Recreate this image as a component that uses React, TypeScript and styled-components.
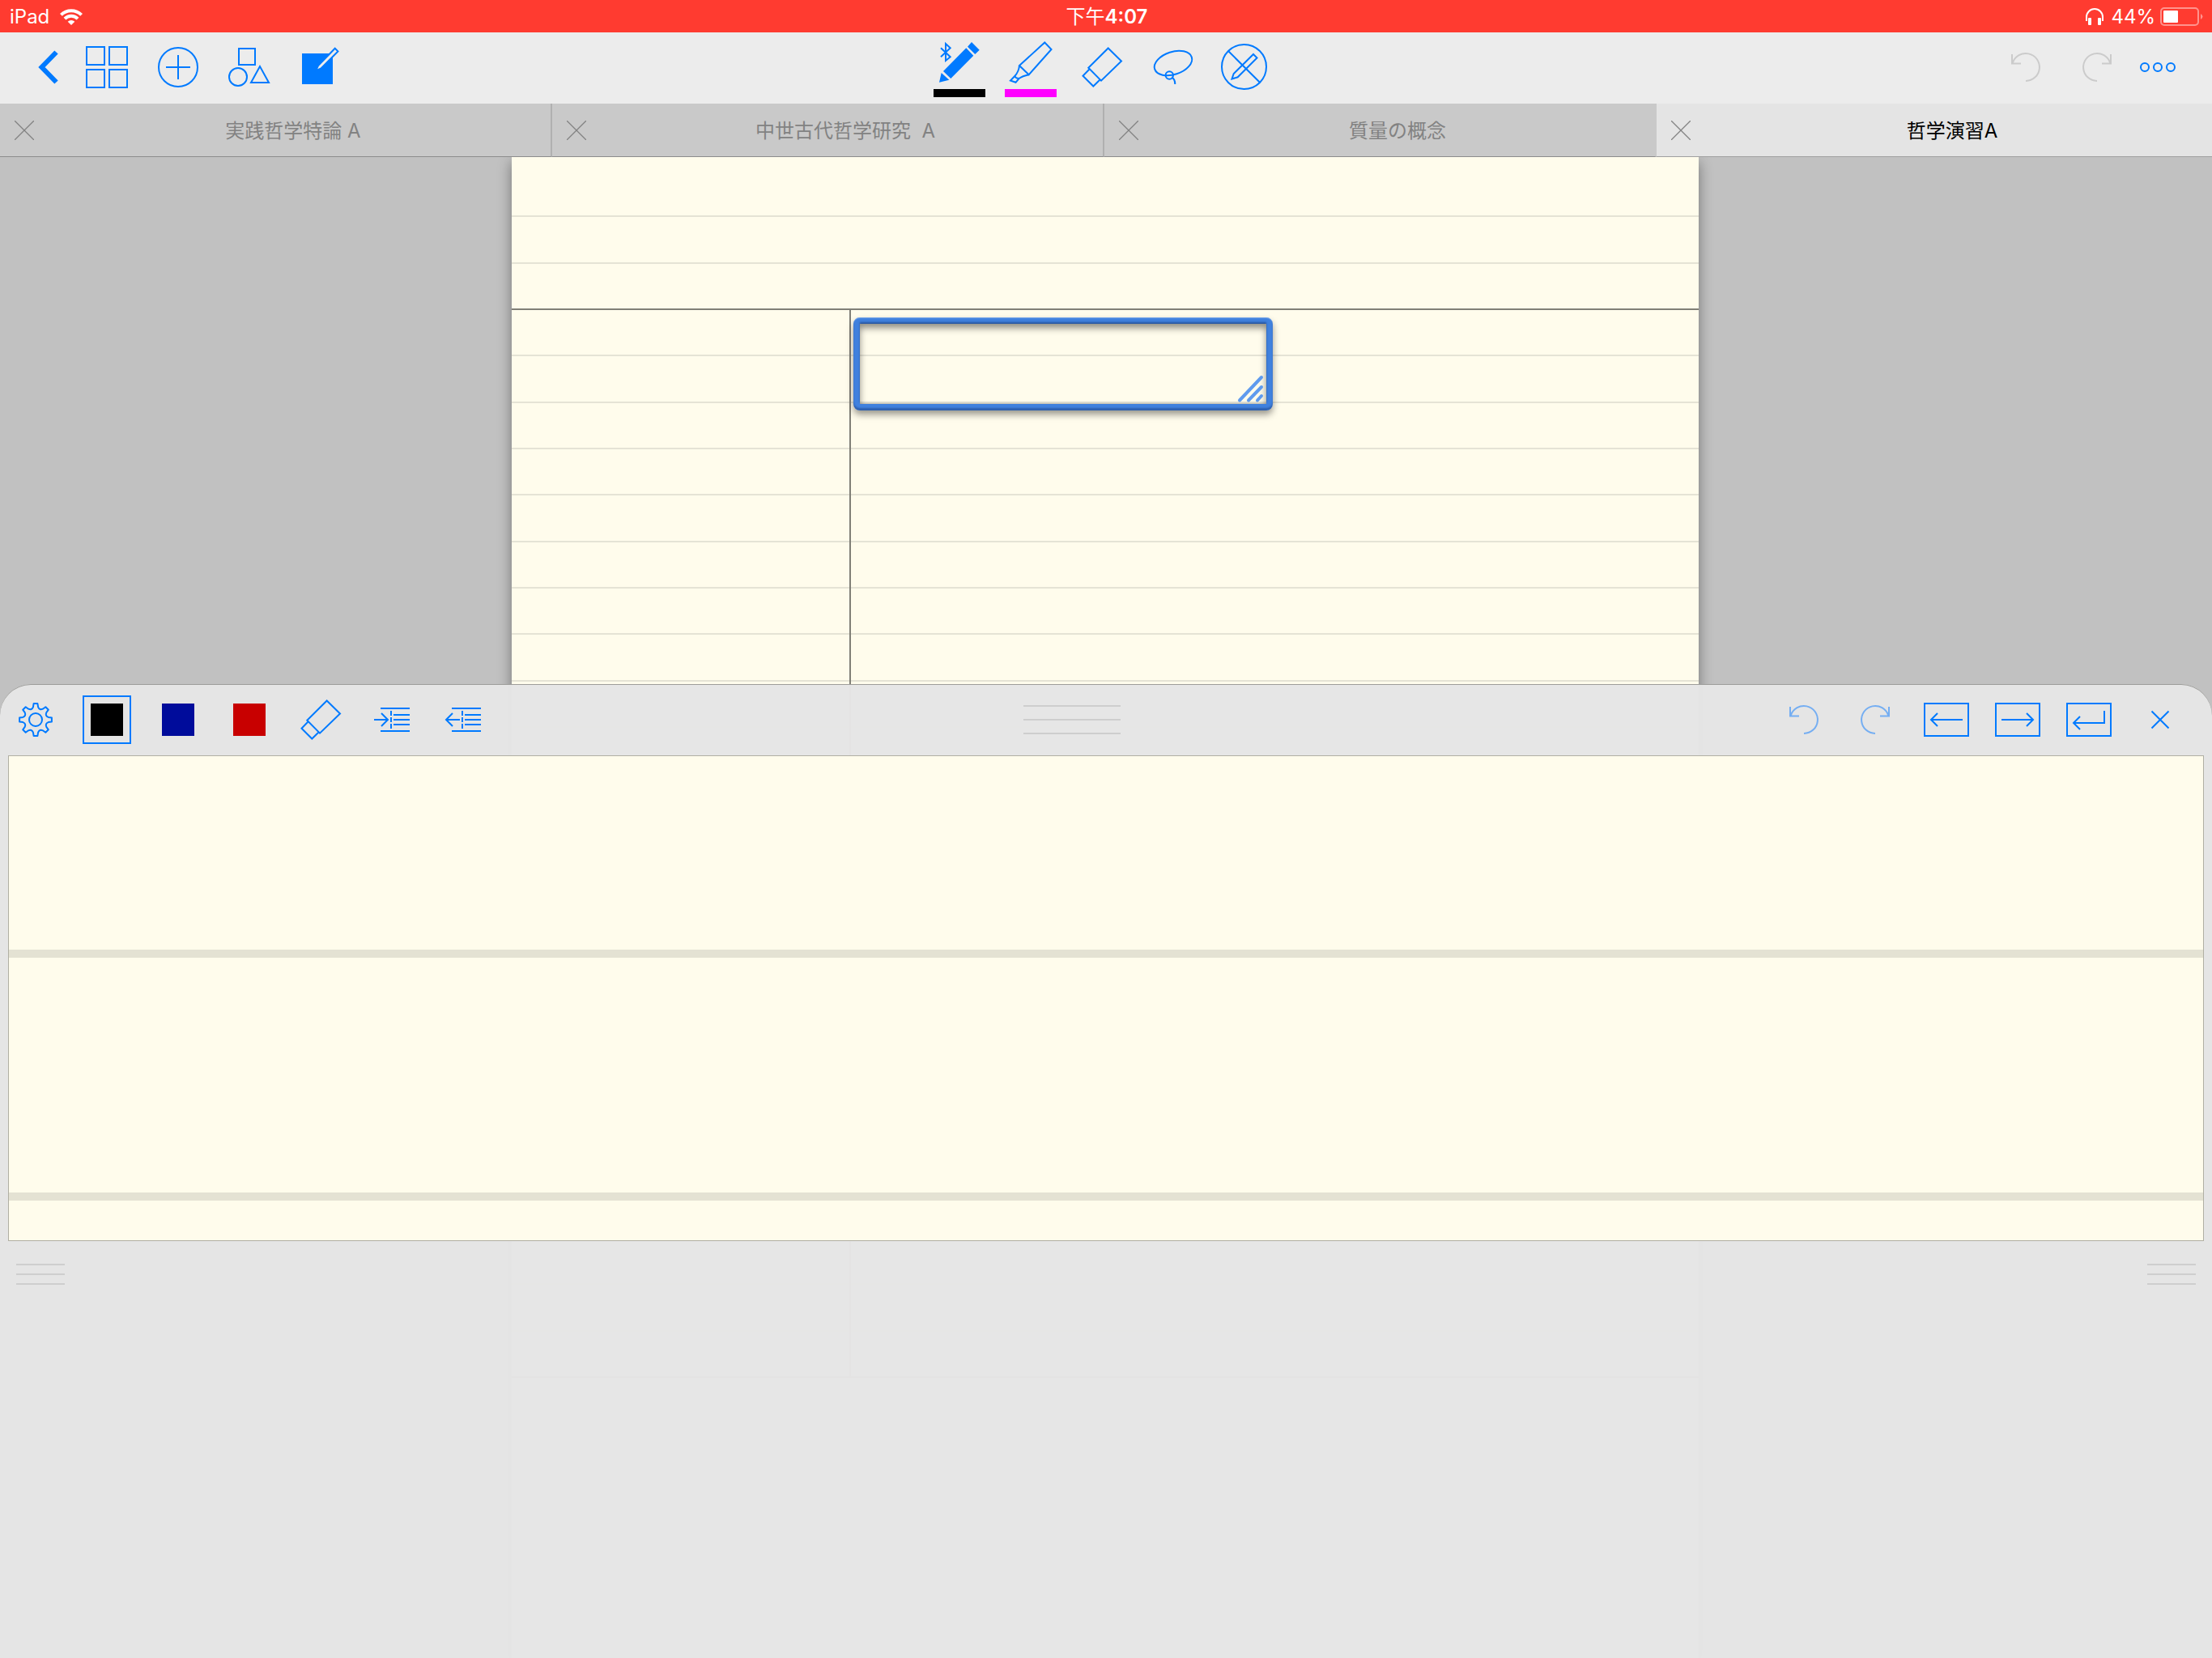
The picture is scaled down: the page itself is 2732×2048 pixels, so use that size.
import React, { useState } from "react";
import styled, { createGlobalStyle, css } from "styled-components";

const BLUE = "#007aff";
const PAPER = "#fffcec";
const RULE = "#e5e3d5";
const RULE_DARK = "#807f77";

const GlobalStyle = createGlobalStyle`
  * { box-sizing: border-box; }
  html, body, #root { margin: 0; height: 100%; }
  body {
    font-family: Inter, "Noto Sans CJK JP", sans-serif;
    font-size: 24px;
    line-height: 32px;
    color: #000;
    background: #c1c1c1;
  }
  button {
    margin: 0;
    padding: 0;
    border: 0;
    background: none;
    font: inherit;
    color: inherit;
    cursor: pointer;
  }
`;

const App = styled.div`
  display: flex;
  flex-direction: column;
  min-height: 100vh;
`;

/* ---------- status bar ---------- */

const StatusBar = styled.header`
  display: grid;
  grid-template-columns: 1fr auto 1fr;
  align-items: center;
  height: 40px;
  padding: 2px 10px 0 12px;
  background: #ff3b30;
  color: #fff;
`;

const StatusGroup = styled.div<{ $end?: boolean; $gap: number }>`
  display: flex;
  align-items: center;
  gap: ${(p) => p.$gap}px;
  justify-content: ${(p) => (p.$end ? "flex-end" : "flex-start")};
`;

const Clock = styled.time`
  font-weight: 600;
`;

const ClockPeriod = styled.span`
  font-weight: 400;
`;

/* ---------- main toolbar ---------- */

const Toolbar = styled.div`
  display: grid;
  grid-template-columns: 1fr auto 1fr;
  height: 88px;
  padding-right: 10px;
  background: #ececec;
`;

const ToolGroup = styled.div<{ $end?: boolean }>`
  display: flex;
  ${(p) =>
    p.$end &&
    css`
      justify-content: flex-end;
      padding-right: 26px;
    `}
`;

const ToolButton = styled.button<{ $narrow?: boolean }>`
  display: flex;
  flex-direction: column;
  align-items: center;
  width: ${(p) => (p.$narrow ? 62 : 88)}px;
  height: 88px;
  color: ${BLUE};

  &:disabled {
    color: #cbcbcb;
    cursor: default;
  }
`;

const InkBar = styled.span<{ $color: string }>`
  width: 64px;
  height: 10px;
  background: ${(p) => p.$color};
`;

const Glyph = styled.svg`
  display: block;
  flex: none;
  fill: none;
  stroke: currentColor;
  stroke-width: 2;
`;

/* ---------- document tabs ---------- */

const TabBar = styled.nav`
  display: flex;
  height: 66px;
`;

const Tab = styled.div<{ $active?: boolean; $divider?: boolean }>`
  display: flex;
  flex: 0 0 calc(25% - 1px);
  border-right: 2px solid ${(p) => (p.$divider ? "#b0b0b0" : "#c9c9c9")};
  border-bottom: 1px solid rgba(0, 0, 0, 0.3);
  background: ${(p) => (p.$active ? "#e4e4e4" : "#c9c9c9")};
  color: ${(p) => (p.$active ? "#000" : "#828282")};

  &:last-child {
    flex: 1;
    border-right: 0;
  }
`;

const TabClose = styled.button`
  display: flex;
  align-items: center;
  justify-content: flex-end;
  width: 42px;
  color: #828282;
`;

const TabTitle = styled.button`
  flex: 1;
  padding: 2px 0 0 2px;
  white-space: pre;
`;

/* ---------- notebook page ---------- */

const Workspace = styled.main`
  position: relative;
  display: flex;
  flex: 1;
  justify-content: center;
  min-height: 1300px;
  padding-right: 2px;
  overflow: hidden;
  background: #c1c1c1;
`;

const Page = styled.section`
  position: relative;
  width: 53.7%;
  background: ${PAPER};
  box-shadow: 0 6px 16px rgba(0, 0, 0, 0.4);
`;

const PageHeader = styled.div`
  display: grid;
  grid-auto-rows: 1fr;
  height: 189px;
  padding-top: 17px;
`;

const HeaderLine = styled.div`
  border-bottom: 2px solid ${RULE};

  &:last-child {
    border-bottom-color: ${RULE_DARK};
  }
`;

const PageBody = styled.div`
  display: grid;
  grid-auto-rows: 1fr;
  height: 1319px;
`;

const BodyLine = styled.div`
  display: grid;
  grid-template-columns: 419px 1fr;
  border-bottom: 2px solid ${RULE};

  &:last-child {
    border-bottom-color: ${RULE_DARK};
  }
`;

const CueCell = styled.div`
  margin-bottom: -2px;
  border-right: 2px solid ${RULE_DARK};
`;

const ZoomTarget = styled.div`
  position: absolute;
  top: 198px;
  left: 422px;
  display: flex;
  align-items: flex-end;
  justify-content: flex-end;
  width: 518px;
  height: 115px;
  border: 8px solid #4081de;
  border-radius: 8px;
  box-shadow:
    0 5px 8px rgba(0, 0, 0, 0.4),
    inset 0 -1px 1px rgba(0, 0, 0, 0.2),
    inset 0 5px 8px rgba(0, 0, 0, 0.45);
`;

const TargetEdge = styled.span`
  position: absolute;
  inset: -8px;
  border-radius: 8px;
  box-shadow:
    inset 0 -3px 2px rgba(20, 50, 110, 0.4),
    inset 0 1px 1px rgba(255, 255, 255, 0.35);
`;

const TargetInnerEdge = styled.span`
  position: absolute;
  inset: 0;
  box-shadow: 0 -2px 2px rgba(20, 50, 110, 0.55);
`;

/* ---------- zoom writing panel ---------- */

const Panel = styled.section`
  position: absolute;
  right: 0;
  bottom: 0;
  left: 0;
  border-radius: 38px 38px 0 0;
  background: rgba(229, 229, 229, 0.98);
  box-shadow: inset 0 1px 0 #9d9d9a;
`;

const PanelBar = styled.div`
  display: grid;
  grid-template-columns: 15fr auto 16fr;
  height: 88px;
`;

const PanelTools = styled.div<{ $end?: boolean }>`
  display: flex;
  align-items: center;
  ${(p) =>
    p.$end &&
    css`
      justify-content: flex-end;
      padding-right: 20px;

      button:disabled {
        color: #75aef2;
      }
    `}
`;

const SwatchSlot = styled.span`
  display: flex;
  justify-content: center;
  width: 88px;
`;

const Swatch = styled.input<{ $color: string }>`
  appearance: none;
  width: 60px;
  height: 60px;
  margin: 0;
  padding: 8px;
  border: 2px solid transparent;
  background: ${(p) => p.$color} content-box;
  cursor: pointer;

  &:checked {
    border-color: ${BLUE};
  }
`;

const Handle = styled.div<{ $width: number; $gap: number }>`
  display: flex;
  flex-direction: column;
  justify-content: center;
  gap: ${(p) => p.$gap}px;
  width: ${(p) => p.$width}px;
`;

const HandleLine = styled.span`
  height: 2px;
  background: #cecece;
`;

const WritingPad = styled.div`
  display: grid;
  grid-template-rows: 249px 300px 1fr;
  height: 600px;
  margin: 0 10px;
  border: 1px solid #b0afa3;
  background: ${PAPER};
`;

const PadLine = styled.div`
  border-bottom: 10px solid #e4e2d3;
`;

const PanelFooter = styled.footer`
  display: flex;
  align-items: flex-start;
  justify-content: space-between;
  min-height: 515px;
  padding: 28px 20px;
`;

/* ---------- drawings ---------- */

type IconProps = { children: React.ReactNode; height?: number; shift?: number };

function Icon({ children, height = 88, shift = 0 }: IconProps) {
  return (
    <Glyph width={88} height={height} viewBox={`0 ${-shift} 88 ${height}`} aria-hidden="true">
      {children}
    </Glyph>
  );
}

const eraser = (
  <path d="M51.7 19.5 68 35.5 43 59.7 27.3 43.7ZM28.7 45.3 20.5 53.7 33.3 66.5 41.5 58.5" />
);

const undoArrow = <path d="M44 60A17 17 0 1 0 27.8 37.6M27 27V38.5H38" />;
const redoArrow = <path d="M44 60A17 17 0 1 1 60.2 37.6M61 27V38.5H50" />;

function gearPath() {
  const pts: string[] = [];
  const at = (r: number, deg: number) => {
    const a = (deg * Math.PI) / 180;
    return `${(44 + r * Math.sin(a)).toFixed(1)} ${(44 - r * Math.cos(a)).toFixed(1)}`;
  };
  for (let k = 0; k < 8; k++) {
    const c = k * 45;
    pts.push(`${k === 0 ? "M" : "L"}${at(20, c - 7)}`);
    pts.push(`L${at(20, c + 7)}`);
    pts.push(`L${at(16, c + 11)}`);
    pts.push(`Q${at(12.5, c + 22.5)} ${at(16, c + 34)}`);
  }
  return pts.join("") + "Z";
}

function Lines({ width, gap }: { width: number; gap: number }) {
  return (
    <Handle $width={width} $gap={gap}>
      <HandleLine />
      <HandleLine />
      <HandleLine />
    </Handle>
  );
}

const tabs = ["実践哲学特論 A", "中世古代哲学研究  A", "質量の概念", "哲学演習A"];
const inks = [
  { name: "Black", color: "#000000" },
  { name: "Blue", color: "#000c9b" },
  { name: "Red", color: "#c80000" },
];

export default function NoteApp() {
  const [active, setActive] = useState(3);
  const [ink, setInk] = useState("Black");

  return (
    <App>
      <GlobalStyle />
      <StatusBar>
        <StatusGroup $gap={13}>
          <span>iPad</span>
          <svg width="28" height="20" viewBox="0 0 28 20" fill="none" stroke="#fff" strokeWidth="4" aria-hidden="true">
            <path d="M1.4 7.4a17.8 17.8 0 0 1 25.2 0" />
            <path d="M6 12.1a11.3 11.3 0 0 1 16 0" />
            <path d="M14 20l-4.3-4.3a6 6 0 0 1 8.6 0z" fill="#fff" stroke="none" />
          </svg>
        </StatusGroup>
        <Clock>
          <ClockPeriod>下午</ClockPeriod>4:07
        </Clock>
        <StatusGroup $end $gap={6}>
          <svg width="26" height="24" viewBox="0 0 26 24" aria-hidden="true">
            <path d="M2 17V12a10 10 0 0 1 20 0v5" fill="none" stroke="#fff" strokeWidth="2" />
            <rect x="4" y="13" width="4" height="9" rx="1" fill="#fff" />
            <rect x="16" y="13" width="4" height="9" rx="1" fill="#fff" />
          </svg>
          <span>44%</span>
          <svg width="54" height="24" viewBox="0 0 54 24" aria-hidden="true">
            <rect x="1" y="1" width="46" height="21" rx="4" fill="none" stroke="#fff" strokeOpacity=".45" strokeWidth="2" />
            <rect x="4" y="4" width="18" height="15" rx="1" fill="#fff" />
            <path d="M50 8q5 3.500 0 7z" fill="#fff" fillOpacity=".45" />
          </svg>
        </StatusGroup>
      </StatusBar>

      <Toolbar>
        <ToolGroup>
          <ToolButton aria-label="Back">
            <Icon>
              <path d="M69.5 24.5 51.500 43 69.500 61.500" strokeWidth="6" />
            </Icon>
          </ToolButton>
          <ToolButton aria-label="Page overview">
            <Icon>
              <path d="M19 18H41V40H19ZM47 18H69V40H47ZM19 46H41V68H19ZM47 46H69V68H47Z" />
            </Icon>
          </ToolButton>
          <ToolButton aria-label="Add">
            <Icon>
              <circle cx="44" cy="43" r="24" />
              <path d="M29 43H59M44 28V58" />
            </Icon>
          </ToolButton>
          <ToolButton aria-label="Shapes">
            <Icon>
              <path d="M31 20H51V40H31ZM57 42 46 62H68Z" />
              <circle cx="30" cy="55" r="11" />
            </Icon>
          </ToolButton>
          <ToolButton aria-label="Edit">
            <Icon>
              <path d="M21 26H59V64H21Z" fill="currentColor" stroke="none" />
              <path d="M61.7 19.700 65.400 23.400 44.500 44.500 38 47.500 41 41Z" fill="#ececec" />
            </Icon>
          </ToolButton>
        </ToolGroup>

        <ToolGroup>
          <ToolButton aria-label="Pen">
            <Icon height={70}>
              <path
                d="M52.300 19.300 61.300 28.700 33.300 57 24 48ZM59 12 68.700 21.700 63.300 27 54 17.700ZM21.700 50 31.300 58.700 19 61.700Z"
                fill="currentColor"
                stroke="none"
              />
              <path d="M21 19.300 32.700 30.300 27 35V14L32.700 19.300 21 30.300" />
            </Icon>
            <InkBar $color="#000" />
          </ToolButton>
          <ToolButton aria-label="Highlighter">
            <Icon height={70}>
              <path d="M61.300 12.500 69.500 21 41.700 52.300 30 41ZM30 41C29.500 46 28 50 24.300 54L19 59.500 25.500 61.800 29.500 57C33 54.500 37 53.300 41.700 52.300M24.300 54Q25.500 57 29.500 57" />
            </Icon>
            <InkBar $color="#ff00ff" />
          </ToolButton>
          <ToolButton aria-label="Eraser">
            <Icon>{eraser}</Icon>
          </ToolButton>
          <ToolButton aria-label="Lasso">
            <Icon>
              <ellipse cx="44" cy="38" rx="24" ry="14" transform="rotate(-18 44 38)" />
              <circle cx="39.300" cy="53" r="4.700" />
              <path d="M42 55.500Q46.300 57.500 46.300 64" />
            </Icon>
          </ToolButton>
          <ToolButton aria-label="Read only mode">
            <Icon>
              <circle cx="43.500" cy="42.500" r="27.500" />
              <path d="M24.300 23.300 62.700 61.500M55 27 59.500 31.500 35.700 55.300 28.500 57.500 30.700 51Z" />
            </Icon>
          </ToolButton>
        </ToolGroup>

        <ToolGroup $end>
          <ToolButton aria-label="Undo" disabled>
            <Icon>{undoArrow}</Icon>
          </ToolButton>
          <ToolButton aria-label="Redo" disabled>
            <Icon>{redoArrow}</Icon>
          </ToolButton>
          <ToolButton aria-label="More" $narrow>
            <Icon>
              <circle cx="28" cy="43" r="5" />
              <circle cx="44" cy="43" r="5" />
              <circle cx="60" cy="43" r="5" />
            </Icon>
          </ToolButton>
        </ToolGroup>
      </Toolbar>

      <TabBar>
        {tabs.map((title, i) => (
          <Tab key={title} $active={i === active} $divider={i + 1 !== active}>
            <TabClose aria-label={`Close ${title}`}>
              <Glyph width={24} height={24} viewBox="0 0 24 24" aria-hidden="true">
                <path d="M0 0 24 24M24 0 0 24" strokeWidth="1.300" />
              </Glyph>
            </TabClose>
            <TabTitle onClick={() => setActive(i)}>{title}</TabTitle>
          </Tab>
        ))}
      </TabBar>

      <Workspace>
        <Page aria-label="Notebook page">
          <PageHeader>
            <HeaderLine />
            <HeaderLine />
            <HeaderLine />
          </PageHeader>
          <PageBody>
            {Array.from({ length: 23 }, (_, i) => (
              <BodyLine key={i}>
                <CueCell />
              </BodyLine>
            ))}
          </PageBody>
          <ZoomTarget>
            <TargetEdge />
            <TargetInnerEdge />
            <svg width="36" height="36" viewBox="0 0 36 36" stroke="#5f9bee" strokeWidth="4" strokeLinecap="round" aria-hidden="true">
              <path d="M3 31.500 30 3M14 31.500 30 15M25 31.500 30 26" />
            </svg>
          </ZoomTarget>
        </Page>

        <Panel aria-label="Zoom writing panel">
          <PanelBar>
            <PanelTools>
              <ToolButton aria-label="Settings">
                <Icon>
                  <path d={gearPath()} strokeLinejoin="round" />
                  <circle cx="44" cy="44" r="8" />
                </Icon>
              </ToolButton>
              {inks.map(({ name, color }) => (
                <SwatchSlot key={name}>
                  <Swatch
                    type="radio"
                    name="ink"
                    aria-label={name}
                    $color={color}
                    checked={ink === name}
                    onChange={() => setInk(name)}
                  />
                </SwatchSlot>
              ))}
              <ToolButton aria-label="Eraser">
                <Icon shift={1}>{eraser}</Icon>
              </ToolButton>
              <ToolButton aria-label="Increase indent">
                <Icon>
                  <path d="M30 30H66M46 38H66M46 44H66M46 50H66M30 58H66M43 33V39M43 41V47M43 49V55M22 44H39M31 36 39 44 31 52" />
                </Icon>
              </ToolButton>
              <ToolButton aria-label="Decrease indent">
                <Icon>
                  <path d="M30 30H66M46 38H66M46 44H66M46 50H66M30 58H66M43 33V39M43 41V47M43 49V55M40 44H23M31 36 23 44 31 52" />
                </Icon>
              </ToolButton>
            </PanelTools>

            <Lines width={120} gap={15} />

            <PanelTools $end>
              <ToolButton aria-label="Undo stroke" disabled>
                <Icon shift={1}>{undoArrow}</Icon>
              </ToolButton>
              <ToolButton aria-label="Redo stroke" disabled>
                <Icon shift={1}>{redoArrow}</Icon>
              </ToolButton>
              <ToolButton aria-label="Move left">
                <Icon>
                  <path d="M17 24H71V64H17ZM64 44H25M33 36 25 44 33 52" />
                </Icon>
              </ToolButton>
              <ToolButton aria-label="Move right">
                <Icon>
                  <path d="M17 24H71V64H17ZM24 44H63M55 36 63 44 55 52" />
                </Icon>
              </ToolButton>
              <ToolButton aria-label="New line">
                <Icon>
                  <path d="M17 24H71V64H17ZM63 33V48H25M33 40 25 48 33 56" />
                </Icon>
              </ToolButton>
              <ToolButton aria-label="Close panel">
                <Icon>
                  <path d="M33.500 33.500 54.500 54.500M54.500 33.500 33.500 54.500" />
                </Icon>
              </ToolButton>
            </PanelTools>
          </PanelBar>

          <WritingPad>
            <PadLine />
            <PadLine />
          </WritingPad>

          <PanelFooter>
            <Lines width={60} gap={10} />
            <Lines width={60} gap={10} />
          </PanelFooter>
        </Panel>
      </Workspace>
    </App>
  );
}
